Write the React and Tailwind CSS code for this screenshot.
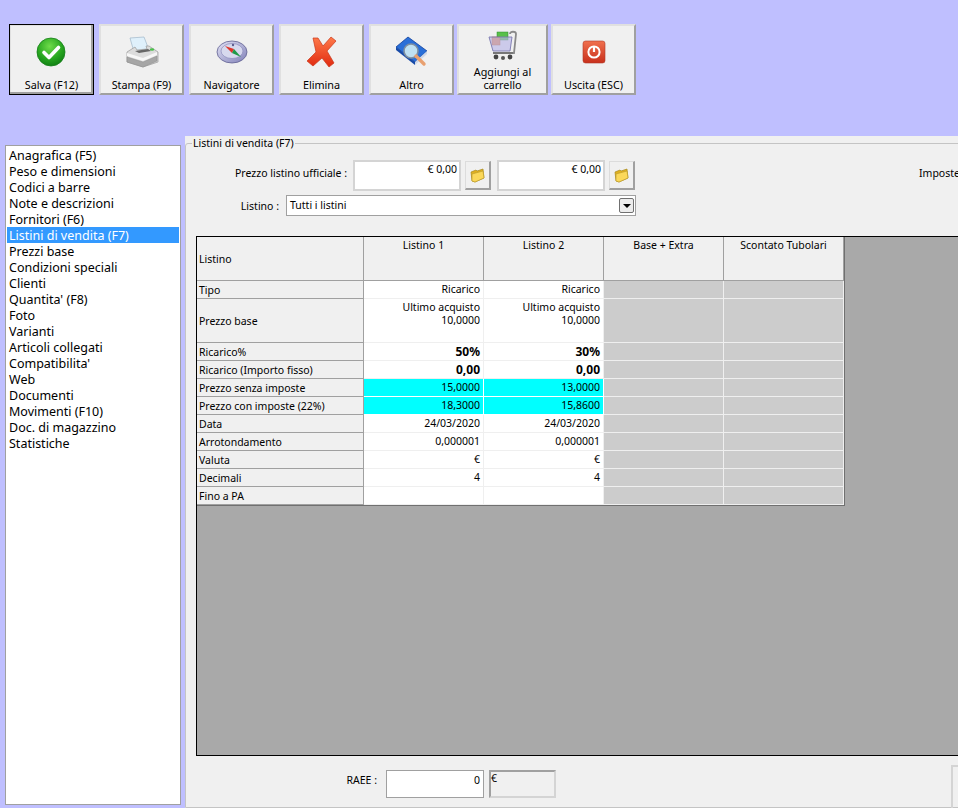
import React from "react";

function CheckIcon() {
  return (
    <svg width="32" height="32" viewBox="0 0 32 32">
      <defs>
        <radialGradient id="chk" cx="45%" cy="30%" r="75%">
          <stop offset="0%" stopColor="#6fdc4a" />
          <stop offset="60%" stopColor="#27a51f" />
          <stop offset="100%" stopColor="#0d7a12" />
        </radialGradient>
      </defs>
      <circle cx="15" cy="16" r="14" fill="url(#chk)" stroke="#17801a" strokeWidth="0.8" />
      <path d="M8 16.5l5 5 9.5-10" fill="none" stroke="#fff" strokeWidth="3.6" strokeLinecap="round" strokeLinejoin="round" />
    </svg>
  );
}

function PrinterIcon() {
  return (
    <svg width="34" height="32" viewBox="0 0 34 32">
      <path d="M5 2l14-1 5 13-15 2z" fill="#dff0fb" stroke="#9fb6c8" strokeWidth="0.7" />
      <path d="M2 16l8-5 2 3 10-1-1-3h3l9 6v10l-15 5-16-5z" fill="#dcdcdc" stroke="#9a9a9a" strokeWidth="0.7" />
      <path d="M2 17l16 5 14-6v3l-14 6-16-5z" fill="#f7f7f7" />
      <path d="M10 15l13-2 3 2-12 2z" fill="#666" />
      <path d="M2 21l16 5 14-6v5l-14 6-16-5z" fill="#a6a6a6" stroke="#8a8a8a" strokeWidth="0.5" />
      <ellipse cx="27" cy="13.5" rx="2.2" ry="1.3" fill="#4cc04c" />
    </svg>
  );
}

function CompassIcon() {
  return (
    <svg width="32" height="32" viewBox="0 0 32 32">
      <defs>
        <linearGradient id="cmp" x1="0" y1="0" x2="1" y2="1">
          <stop offset="0%" stopColor="#e4e4f6" />
          <stop offset="100%" stopColor="#8080b8" />
        </linearGradient>
      </defs>
      <ellipse cx="16" cy="16" rx="15" ry="11" fill="url(#cmp)" stroke="#5f5f90" strokeWidth="0.8" />
      <ellipse cx="16" cy="15" rx="11" ry="7.5" fill="#d7d9ee" stroke="#8d8dbb" strokeWidth="0.7" />
      <path d="M9 10l9 3-2 4z" fill="#e0352a" />
      <path d="M18 13l7 8-9-4z" fill="#1f9a48" />
      <circle cx="17" cy="9" r="1.2" fill="#5f5f90" />
    </svg>
  );
}

function CrossIcon() {
  return (
    <svg width="32" height="32" viewBox="0 0 32 32">
      <defs>
        <linearGradient id="crs" x1="0" y1="0" x2="0" y2="1">
          <stop offset="0%" stopColor="#ff7a4a" />
          <stop offset="100%" stopColor="#e02a10" />
        </linearGradient>
      </defs>
      <path d="M7 2l5 0 5 8 8-9 5 4-9 10 7 12-5 4-7-9-9 8-6-5 9-9z" fill="url(#crs)" stroke="#c8361a" strokeWidth="0.7" strokeLinejoin="round" />
    </svg>
  );
}

function BookIcon() {
  return (
    <svg width="32" height="32" viewBox="0 0 32 32">
      <path d="M0 11L12 1l19 14-12 11z" fill="#2a6fd8" stroke="#12409a" strokeWidth="0.8" />
      <path d="M0 11v3l19 15v-3z" fill="#174aa8" />
      <path d="M19 26v3l12-11v-3z" fill="#cfd8e8" />
      <circle cx="15" cy="15" r="7" fill="#bfe0f2" stroke="#7f8fa0" strokeWidth="1.6" />
      <path d="M20 20l8 8" stroke="#e8a070" strokeWidth="3.4" strokeLinecap="round" />
    </svg>
  );
}

function CartIcon() {
  return (
    <svg width="32" height="32" viewBox="0 0 32 32">
      <path d="M23 5c0-3 6-3 6 0l-2 19H9" fill="none" stroke="#8a8a8a" strokeWidth="1.8" />
      <rect x="10" y="3" width="11" height="8" fill="#58c04a" stroke="#2f8a2f" strokeWidth="0.5" />
      <rect x="5" y="8" width="8" height="8" fill="#ee8a4a" stroke="#b85a20" strokeWidth="0.5" />
      <path d="M2 8h23l-2 14H6z" fill="#b9b6e6" fillOpacity="0.65" stroke="#7a78b0" strokeWidth="0.9" />
      <path d="M6 24h20" stroke="#777" strokeWidth="2" />
      <circle cx="9" cy="28" r="2.4" fill="#444" />
      <circle cx="23" cy="28" r="2.4" fill="#444" />
      <circle cx="16" cy="29" r="2" fill="#555" />
    </svg>
  );
}

function PowerIcon() {
  return (
    <svg width="32" height="32" viewBox="0 0 32 32">
      <defs>
        <linearGradient id="pwr" x1="0" y1="0" x2="0" y2="1">
          <stop offset="0%" stopColor="#f0704e" />
          <stop offset="100%" stopColor="#c8301c" />
        </linearGradient>
      </defs>
      <rect x="5" y="5" width="22" height="22" rx="2.5" fill="url(#pwr)" stroke="#b03a28" strokeWidth="0.6" />
      <circle cx="16" cy="16" r="5.6" fill="none" stroke="#fff" strokeWidth="2" />
      <path d="M16 10v6" stroke="#fff" strokeWidth="2.2" />
    </svg>
  );
}

function FolderIcon() {
  return (
    <svg width="16" height="16" viewBox="0 0 16 16">
      <path d="M1 5l5-2 1 1 6-2 1 9-9 4-3-1z" fill="#e0b020" stroke="#a88a20" strokeWidth="0.7" />
      <path d="M2 7l11-3 1 7-9 4-3-1z" fill="#fbd85a" stroke="#b8982a" strokeWidth="0.6" />
    </svg>
  );
}

const toolbar = [
  { label: "Salva (F12)", icon: <CheckIcon />, w: "w-[85px]", active: true },
  { label: "Stampa (F9)", icon: <PrinterIcon />, w: "w-[85px] ml-[5px]" },
  { label: "Navigatore", icon: <CompassIcon />, w: "w-[85px] ml-[5px]" },
  { label: "Elimina", icon: <CrossIcon />, w: "w-[85px] ml-[5px]" },
  { label: "Altro", icon: <BookIcon />, w: "w-[85px] ml-[5px]" },
  { label: "Aggiungi al carrello", icon: <CartIcon />, w: "w-[91px] ml-[3px]", top: "mt-[3px]" },
  { label: "Uscita (ESC)", icon: <PowerIcon />, w: "w-[85px] ml-[3px]" },
];

const menu = [
  "Anagrafica (F5)",
  "Peso e dimensioni",
  "Codici a barre",
  "Note e descrizioni",
  "Fornitori (F6)",
  "Listini di vendita (F7)",
  "Prezzi base",
  "Condizioni speciali",
  "Clienti",
  "Quantita' (F8)",
  "Foto",
  "Varianti",
  "Articoli collegati",
  "Compatibilita'",
  "Web",
  "Documenti",
  "Movimenti (F10)",
  "Doc. di magazzino",
  "Statistiche",
];

const rows = [
  { label: "Tipo", a: "Ricarico", b: "Ricarico" },
  { label: "Prezzo base", a: ["Ultimo acquisto", "10,0000"], b: ["Ultimo acquisto", "10,0000"], tall: true },
  { label: "Ricarico%", a: "50%", b: "30%", bold: true },
  { label: "Ricarico (Importo fisso)", a: "0,00", b: "0,00", bold: true },
  { label: "Prezzo senza imposte", a: "15,0000", b: "13,0000", cyan: true },
  { label: "Prezzo con imposte (22%)", a: "18,3000", b: "15,8600", cyan: true },
  { label: "Data", a: "24/03/2020", b: "24/03/2020" },
  { label: "Arrotondamento", a: "0,000001", b: "0,000001" },
  { label: "Valuta", a: "€", b: "€" },
  { label: "Decimali", a: "4", b: "4" },
  { label: "Fino a PA", a: "", b: "" },
];

function ValueCell({ value, bold, cyan }) {
  const lines = Array.isArray(value) ? value : [value];
  return (
    <div
      className={`w-[120px] pr-[3px] pt-[2px] text-right leading-[13px] border-r border-b ${
        cyan ? "bg-[#00ffff] border-white" : "bg-white border-[#efefef]"
      } ${bold ? "font-bold text-[12px]" : ""}`}
    >
      {lines.map((l, i) => (
        <div key={i}>{l || "\u00a0"}</div>
      ))}
    </div>
  );
}

function PriceRow({ row }) {
  return (
    <div className={`flex ${row.tall ? "h-[44px]" : "h-[18px]"}`}>
      <div className="w-[167px] pl-[2px] pt-[3px] flex items-center bg-[#f0f0f0] border-r border-b border-[#a0a0a0] whitespace-nowrap">
        {row.label}
      </div>
      <ValueCell value={row.a} bold={row.bold} cyan={row.cyan} />
      <ValueCell value={row.b} bold={row.bold} cyan={row.cyan} />
      <div className="w-[120px] bg-[#cccccc] border-r border-b border-[#efefef]" />
      <div className="w-[120px] bg-[#cccccc] border-r border-b border-[#efefef]" />
    </div>
  );
}

function PriceField() {
  return (
    <div className="flex items-center">
      <div className="w-[108px] h-[31px] bg-white border-2 border-[#d4d4d4] text-right pr-[2px] leading-[14px]">
        € 0,00
      </div>
      <button className="w-[26px] h-[29px] ml-[4px] flex items-center justify-center bg-[#f0f0f0] border border-[#dcdcdc] border-b-2 border-r-2 border-b-[#a0a0a0] border-r-[#a0a0a0]">
        <FolderIcon />
      </button>
    </div>
  );
}

export default function App() {
  return (
    <div
      className="w-[958px] h-[808px] overflow-hidden flex flex-col bg-[#bfbfff] text-[10.5px] text-black"
      style={{ fontFamily: '"Noto Sans", "Liberation Sans", Arial, sans-serif' }}
    >
      <div className="h-[136px] shrink-0 pt-[24px] pl-[9px] flex items-start">
        {toolbar.map((b) => (
          <button
            key={b.label}
            className={`${b.w} h-[71px] shrink-0 relative flex flex-col items-center bg-[#f0f0f0] text-[10.8px] ${
              b.active
                ? "border border-black shadow-[inset_-2px_-2px_0_#a0a0a0,inset_1px_1px_0_#e0e0e0]"
                : "border-2 border-t-[#e0e0e0] border-l-[#e0e0e0] border-b-[#a0a0a0] border-r-[#a0a0a0]"
            }`}
          >
            <div className={b.top || (b.active ? "mt-[11px]" : "mt-[10px]")}>{b.icon}</div>
            <span className={`mt-auto leading-[13px] px-[8px] text-center ${b.active ? "mb-[3px]" : "mb-[2px]"}`}>
              {b.label}
            </span>
          </button>
        ))}
      </div>

      <div className="flex-1 flex min-h-0">
        <div className="w-[176px] shrink-0 ml-[5px] mt-[9px] mb-[3px] bg-white border border-[#a0a0a0] pt-[1px] pl-[1px] pr-[1px] text-[12.5px]">
          {menu.map((m) => (
            <div
              key={m}
              className={`h-[16px] leading-[17px] pl-[2px] whitespace-nowrap ${
                m === "Listini di vendita (F7)" ? "bg-[#3399ff] text-white" : ""
              }`}
            >
              {m}
            </div>
          ))}
        </div>

        <div className="w-[773px] shrink-0 ml-[4px] overflow-hidden bg-[#f0f0f0] flex flex-col">
          <fieldset className="w-[900px] h-[672px] shrink-0 border border-[#c4c4c4] rounded-tl-[3px]">
            <legend className="ml-[6px] px-[1px] leading-[14px]">Listini di vendita (F7)</legend>

            <div className="flex items-center mt-[10px] h-[31px] ml-[-1px]">
              <div className="w-[163px] text-right pr-[1px] pb-[3px] whitespace-nowrap">Prezzo listino ufficiale :</div>
              <div className="ml-[5px]">
                <PriceField />
              </div>
              <div className="ml-[6px]">
                <PriceField />
              </div>
              <div className="ml-[284px] pb-[3px] whitespace-nowrap">Imposte</div>
            </div>

            <div className="flex items-center mt-[4px] h-[21px] ml-[-1px]">
              <div className="w-[95px] text-right pr-[1px] pt-[3px] whitespace-nowrap">Listino :</div>
              <div className="ml-[6px] w-[350px] h-[21px] bg-white border border-[#a0a0a0] flex items-center justify-between pl-[3px] pr-[1px]">
                <span className="pt-[1px]">Tutti i listini</span>
                <span className="w-[15px] h-[15px] flex items-center justify-center bg-[#ececec] border border-[#707070] rounded-[2px]">
                  <span className="w-0 h-0 border-l-[4px] border-r-[4px] border-t-[4px] border-l-transparent border-r-transparent border-t-black" />
                </span>
              </div>
            </div>

            <div className="ml-[10px] mt-[20px] w-[800px] h-[520px] bg-[#a9a9a9] border border-black">
              <div className="w-[647px] border-r border-b border-[#707070] box-content">
                <div className="flex h-[44px]">
                  <div className="w-[167px] pl-[2px] pt-[3px] flex items-center bg-[#f0f0f0] border-r border-b border-[#a0a0a0]">
                    Listino
                  </div>
                  {["Listino 1", "Listino 2", "Base + Extra", "Scontato Tubolari"].map((h) => (
                    <div
                      key={h}
                      className="w-[120px] text-center pt-[1px] leading-[14px] bg-[#f0f0f0] border-r border-b border-[#a0a0a0]"
                    >
                      {h}
                    </div>
                  ))}
                </div>
                {rows.map((r) => (
                  <PriceRow key={r.label} row={r} />
                ))}
              </div>
            </div>

            <div className="flex mt-[14px] ml-[-1px] h-[28px]">
              <div className="w-[192px] text-right leading-[20px] whitespace-nowrap">RAEE :</div>
              <div className="ml-[9px] w-[98px] h-[28px] bg-white border border-[#a0a0a0] text-right pr-[3px] leading-[18px]">
                0
              </div>
              <div className="ml-[5px] w-[67px] h-[28px] border-2 border-t-[#a0a0a0] border-l-[#a0a0a0] border-b-[#d4d4d4] border-r-[#d4d4d4] leading-[13px]">
                €
              </div>
              <div className="ml-[395px] mt-[-5px] w-[30px] h-[50px] border-2 border-[#d4d4d4]" />
            </div>
          </fieldset>
        </div>
      </div>
    </div>
  );
}
